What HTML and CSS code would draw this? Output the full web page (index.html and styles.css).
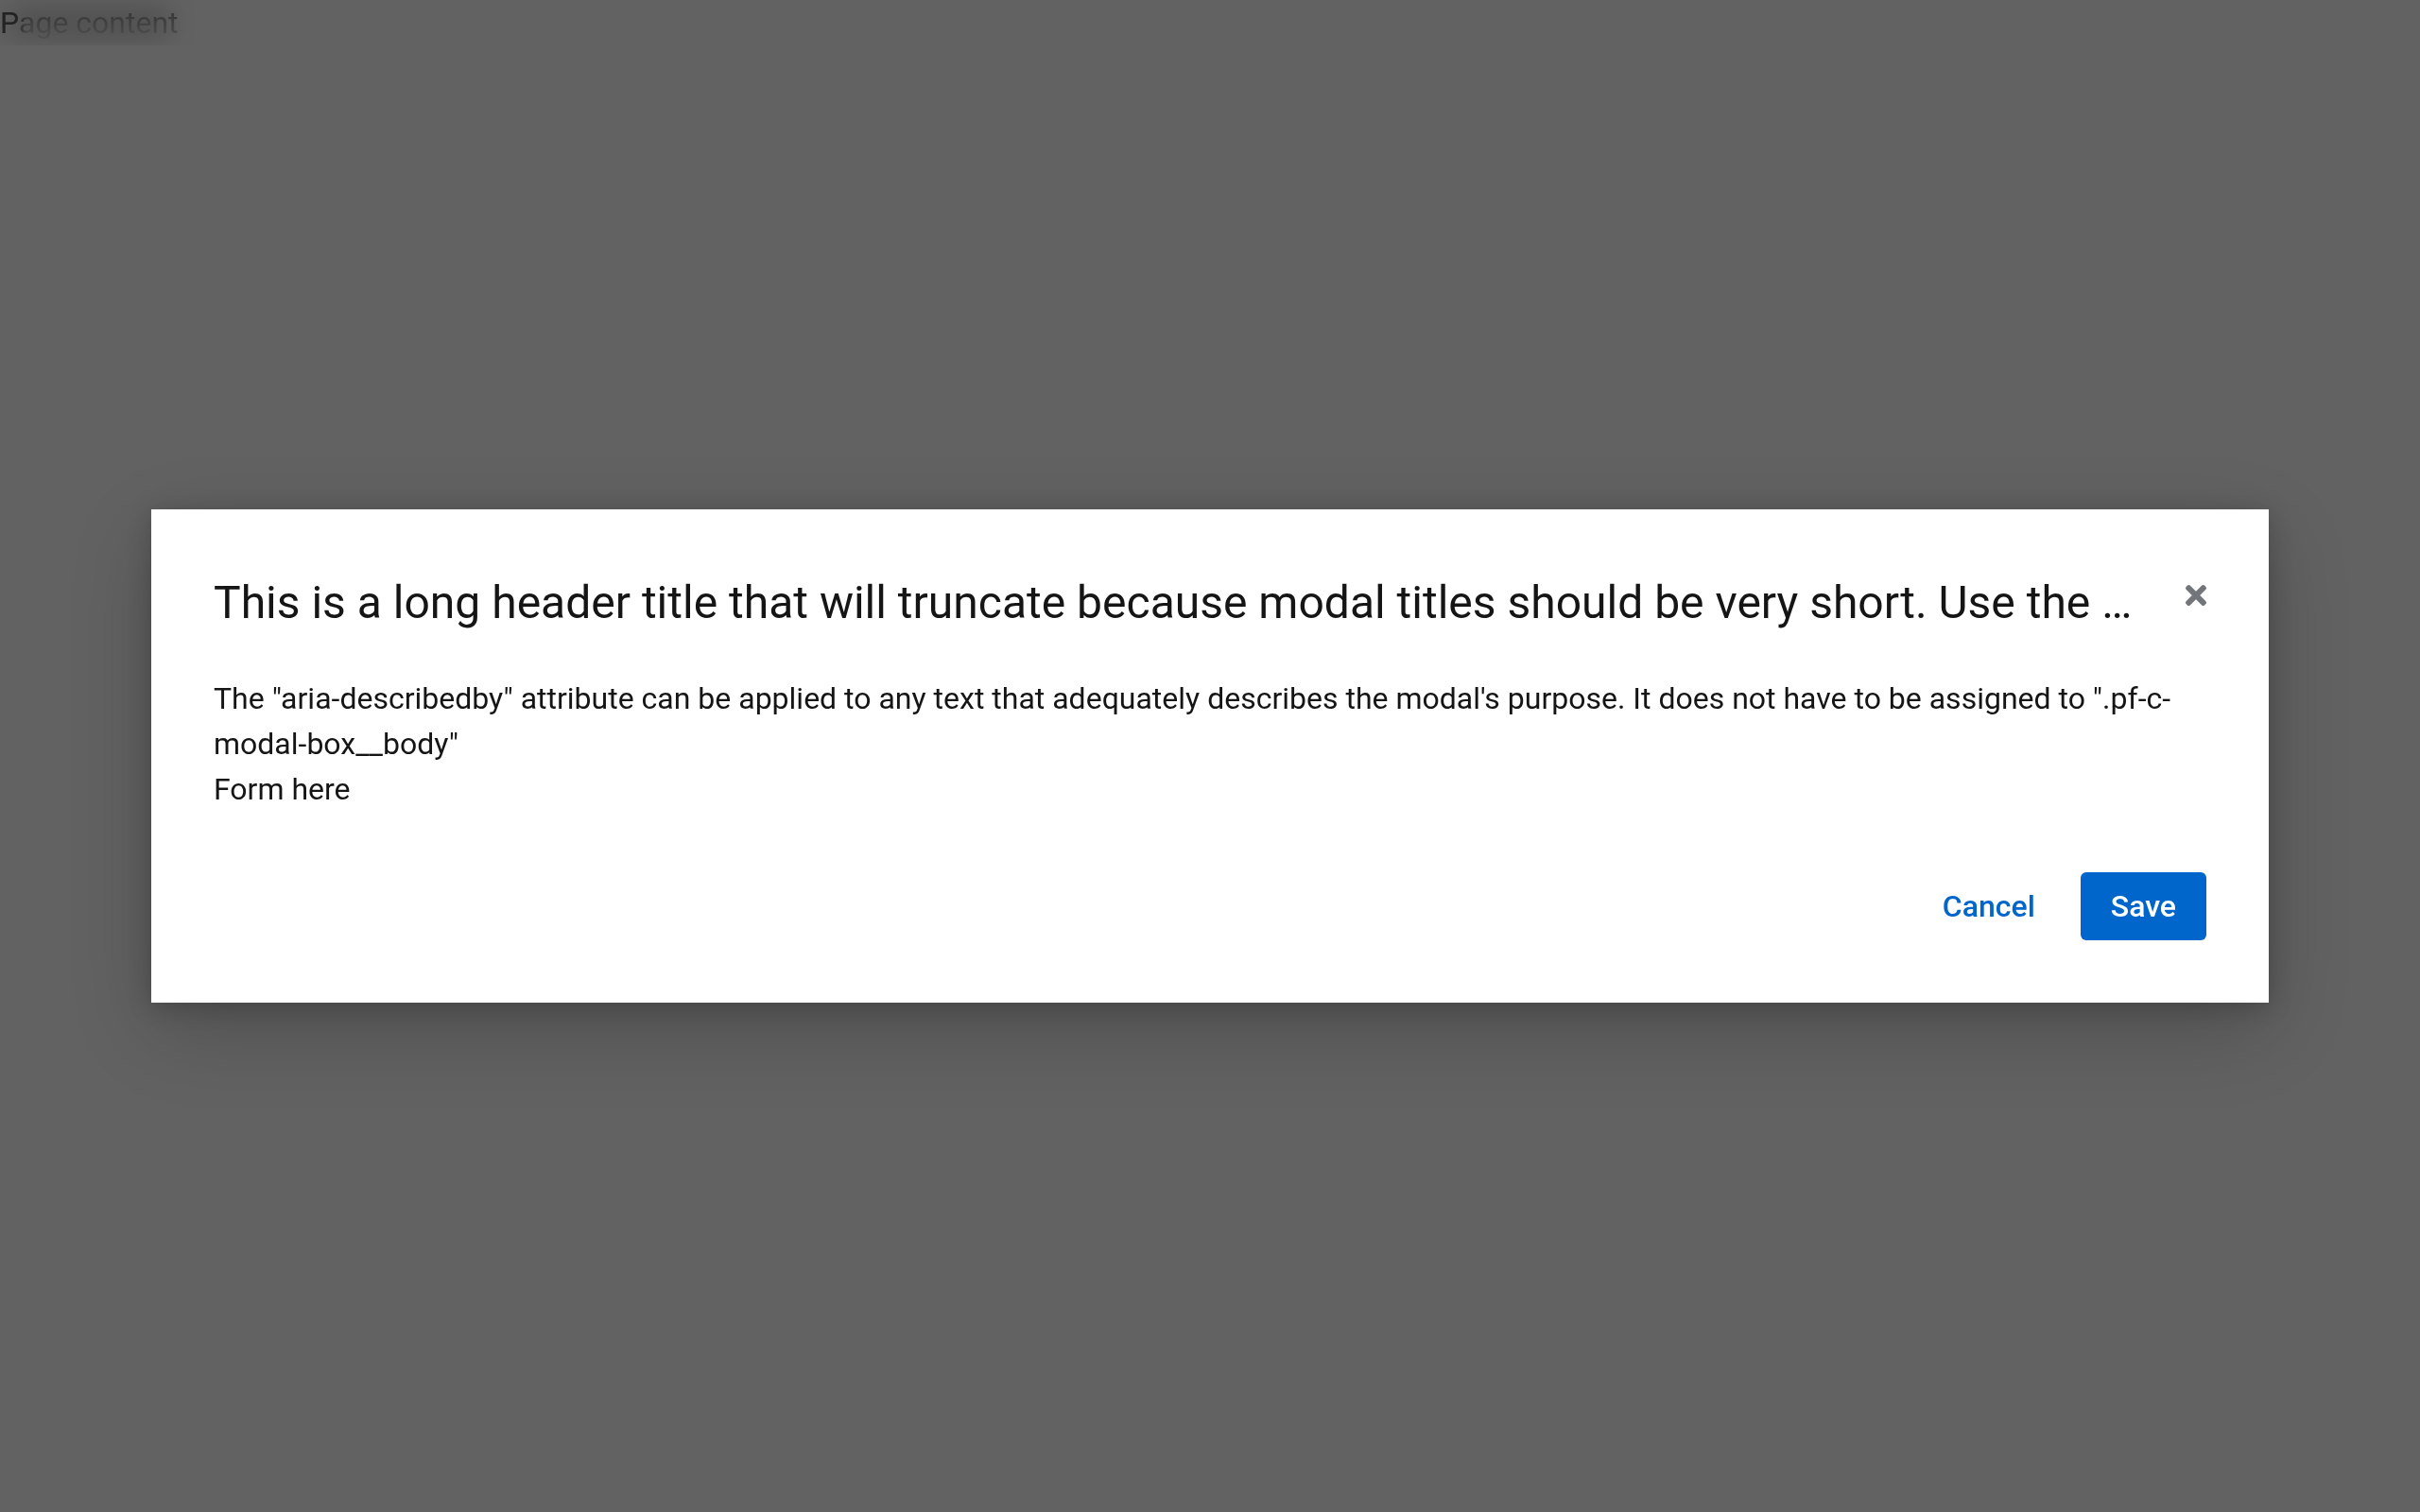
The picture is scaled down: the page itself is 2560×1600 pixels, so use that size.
FILE: index.html
```html
<!DOCTYPE html>
<html lang="en">
<head>
<meta charset="utf-8">
<title>Modal box</title>
<link rel="stylesheet" href="styles.css">
</head>
<body>
<main class="page"><div class="page-shadow"><span class="page-text">Page content</span></div></main>
<div class="backdrop">
  <section class="modal" role="dialog" aria-modal="true" aria-labelledby="modal-title" aria-describedby="modal-description">
    <header class="modal-header">
      <h1 class="modal-title" id="modal-title">This is a long header title that will truncate because modal titles should be very short. Use the …</h1>
      <button class="close" type="button" aria-label="Close">
        <svg class="close-icon" viewBox="0 0 352 512" aria-hidden="true"><path fill="currentColor" d="M242.72 256l100.07-100.07c12.28-12.28 12.28-32.19 0-44.48l-22.24-22.24c-12.28-12.28-32.19-12.28-44.48 0L176 189.28 75.93 89.21c-12.28-12.28-32.19-12.28-44.48 0L9.21 111.45c-12.28 12.28-12.28 32.19 0 44.48L109.28 256 9.21 356.07c-12.28 12.28-12.28 32.19 0 44.48l22.24 22.24c12.28 12.28 32.2 12.28 44.48 0L176 322.72l100.07 100.07c12.28 12.28 32.2 12.28 44.48 0l22.24-22.24c12.28-12.28 12.28-32.19 0-44.48L242.72 256z"/></svg>
      </button>
    </header>
    <div class="modal-body">
      <p id="modal-description">The "aria-describedby" attribute can be applied to any text that adequately describes the modal's purpose. It does not have to be assigned to ".pf-c-modal-box__body"</p>
      <p>Form here</p>
    </div>
    <footer class="modal-footer">
      <button class="button button-link" type="button">Cancel</button>
      <button class="button button-primary" type="button">Save</button>
    </footer>
  </section>
</div>
</body>
</html>
```
FILE: styles.css
```css
*, *::before, *::after {
  box-sizing: border-box;
}

body {
  margin: 0;
  background: #fff;
  color: #151515;
  font: 400 32px/48px Roboto, "Liberation Sans", sans-serif;
}

.page {
  display: flex;
}

.page-shadow {
  position: relative;
  isolation: isolate;
}

/* soft shade that sits behind the covered page text */
.page-shadow::before {
  content: "";
  position: absolute;
  inset: 12px 8px;
  z-index: -1;
  border-radius: 8px;
  background: rgba(3, 3, 3, 0.28);
  filter: blur(16px);
}

.page-text {
  background:
    linear-gradient(90deg, rgba(80, 80, 80, 0.9) 16px, transparent 28px),
    linear-gradient(#8c8c8c 8px, #d4d4d4 38px);
  background-clip: text;
  -webkit-background-clip: text;
  color: transparent;
}

.backdrop {
  position: fixed;
  inset: 0;
  display: flex;
  align-items: center;
  justify-content: center;
  background: rgba(3, 3, 3, 0.624);
}

.modal {
  display: flex;
  flex-direction: column;
  width: 87.5%;
  padding: 66px;
  background: #fff;
  box-shadow: 0 28px 80px rgba(3, 3, 3, 0.2), 0 4px 24px rgba(3, 3, 3, 0.2);
}

.modal-header {
  display: flex;
  align-items: flex-start;
  gap: 32px;
  margin-bottom: 44px;
}

.modal-title {
  flex: 1;
  min-width: 0;
  margin: 0;
  overflow: hidden;
  font-size: 48px;
  font-weight: 400;
  line-height: 66px;
  text-overflow: ellipsis;
  white-space: nowrap;
}

.close {
  display: flex;
  align-items: center;
  height: 50px;
  padding: 0;
  border: 0;
  background: none;
  color: #72767b;
  cursor: pointer;
}

.close-icon {
  width: 22px;
  height: 32px;
}

.modal-body p {
  margin: 0;
}

.modal-footer {
  display: flex;
  justify-content: flex-end;
  gap: 16px;
  margin-top: 64px;
}

.button {
  padding: 12px 32px;
  border: 0;
  border-radius: 6px;
  font: inherit;
  font-weight: 500;
  cursor: pointer;
}

.button-link {
  background: none;
  color: #06c;
}

.button-primary {
  background: #06c;
  color: #fff;
}
```
